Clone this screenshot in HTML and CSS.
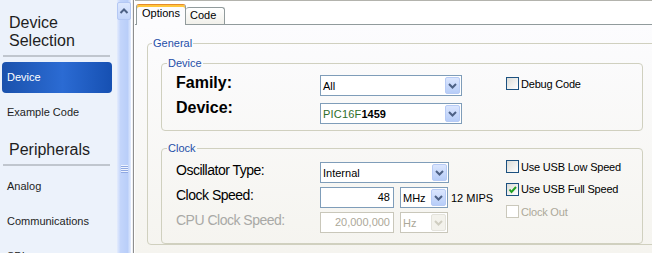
FILE: index.html
```html
<!DOCTYPE html>
<html>
<head>
  <title>Device Selection</title>
  <meta charset="UTF-8">
  <link rel="stylesheet" href="styles.css">
</head>
<body>
  <div class="window">
    <div class="sidebar">
      <h2 class="side-title">Device<br>Selection</h2>
      <hr class="side-rule">
      <div class="side-item active">Device</div>
      <div class="side-item">Example Code</div>
      <h2 class="side-title second">Peripherals</h2>
      <hr class="side-rule">
      <div class="side-item">Analog</div>
      <div class="side-item">Communications</div>
      <div class="side-item">SPI</div>
    </div>

    <div class="scrollbar">
      <div class="scroll-btn">
        <svg width="12" height="16" viewBox="0 0 12 16"><path d="M2.5 10 L6 6.5 L9.5 10" fill="none" stroke="#4d6185" stroke-width="2"/></svg>
      </div>
      <div class="scroll-grip"></div>
    </div>
    <div class="splitter"></div>

    <div class="main">
      <div class="tabs">
        <div class="tab active">Options</div>
        <div class="tab">Code</div>
      </div>
      <div class="panel">
        <fieldset class="group general">
          <legend>General</legend>

          <fieldset class="group inner">
            <legend>Device</legend>
            <div class="row">
              <div class="labels big">
                <div>Family:</div>
                <div>Device:</div>
              </div>
              <div class="controls device-controls">
                <div class="select family">
                  <span class="value">All</span>
                  <span class="drop"><svg width="15" height="17" viewBox="0 0 15 17"><path d="M4 7 L7.5 10.5 L11 7" fill="none" stroke="#4d6185" stroke-width="2"/></svg></span>
                </div>
                <div class="select family">
                  <span class="value"><span class="part">PIC16F</span><b>1459</b></span>
                  <span class="drop"><svg width="15" height="17" viewBox="0 0 15 17"><path d="M4 7 L7.5 10.5 L11 7" fill="none" stroke="#4d6185" stroke-width="2"/></svg></span>
                </div>
              </div>
              <div class="checks device-checks">
                <div class="check"><span class="box"></span>Debug Code</div>
              </div>
            </div>
          </fieldset>

          <fieldset class="group inner clock">
            <legend>Clock</legend>
            <div class="row">
              <div class="labels normal">
                <div>Oscillator Type:</div>
                <div>Clock Speed:</div>
                <div class="disabled-text">CPU Clock Speed:</div>
              </div>
              <div class="controls clock-controls">
                <div class="select osc">
                  <span class="value">Internal</span>
                  <span class="drop"><svg width="15" height="17" viewBox="0 0 15 17"><path d="M4 7 L7.5 10.5 L11 7" fill="none" stroke="#4d6185" stroke-width="2"/></svg></span>
                </div>
                <div class="inline">
                  <div class="field">48</div>
                  <div class="select unit">
                    <span class="value">MHz</span>
                    <span class="drop"><svg width="15" height="17" viewBox="0 0 15 17"><path d="M4 7 L7.5 10.5 L11 7" fill="none" stroke="#4d6185" stroke-width="2"/></svg></span>
                  </div>
                  <span class="mips">12 MIPS</span>
                </div>
                <div class="inline">
                  <div class="field disabled">20,000,000</div>
                  <div class="select unit disabled">
                    <span class="value">Hz</span>
                    <span class="drop"><svg width="15" height="17" viewBox="0 0 15 17"><path d="M4 7 L7.5 10.5 L11 7" fill="none" stroke="#cfcdc0" stroke-width="2"/></svg></span>
                  </div>
                </div>
              </div>
              <div class="checks clock-checks">
                <div class="check"><span class="box"></span>Use USB Low Speed</div>
                <div class="check"><span class="box"><svg width="11" height="11" viewBox="0 0 11 11"><path d="M2.5 5.5 L4.5 8 L9 3" fill="none" stroke="#21a121" stroke-width="2"/></svg></span>Use USB Full Speed</div>
                <div class="check disabled"><span class="box"></span>Clock Out</div>
              </div>
            </div>
          </fieldset>
        </fieldset>
      </div>
    </div>
  </div>
</body>
</html>
```

FILE: styles.css
```css
* {
  box-sizing: border-box;
}

body {
  margin: 0;
  font-family: "Liberation Sans", Arial, sans-serif;
  font-size: 11px;
  color: #000;
  background: #fff;
  overflow: hidden;
}

.window {
  display: flex;
  width: 652px;
  height: 253px;
  overflow: hidden;
}

/* left list */
.sidebar {
  flex: none;
  width: 117px;
  padding: 0 5px 0 2px;
  background: #ecf2fb;
  color: #1e1e1e;
}

.side-title {
  margin: 14px 0 0 7px;
  font-size: 16px;
  font-weight: normal;
  line-height: 18px;
}

/* item margin-bottom collapses into this one */
.side-title.second {
  margin-top: 13px;
}

.side-rule {
  margin: 5px 0 0 1px;
  width: 107px;
  height: 2px;
  border: 0;
  background: #c0c6ce;
}

.side-rule + .side-item {
  margin-top: 5px;
}

.side-item {
  height: 31px;
  line-height: 31px;
  padding-left: 5px;
  margin-bottom: 4px;
  border-radius: 4px;
  white-space: nowrap;
}

.side-item.active {
  color: #fff;
  background: linear-gradient(to right, #1a51ac, #2b6bd3 55%, #1650b2);
}

/* scrollbar + splitter */
.scrollbar {
  flex: none;
  width: 14px;
  padding-top: 2px;
  background: linear-gradient(to right, #e4ecfd, #c3d5fb 25%, #b9cef9 75%, #e4ecfd);
}

.scroll-btn {
  height: 18px;
  display: flex;
  justify-content: center;
  border: 1px solid #b4c8f4;
  border-radius: 2px;
  background: linear-gradient(#dde8fe, #c4d6fb);
}

.scroll-grip {
  margin: 145px auto 0;
  width: 7px;
  height: 8px;
  background: repeating-linear-gradient(#eef3fe 0 1px, #8fa8e2 1px 2px);
}

.splitter {
  flex: none;
  width: 4px;
  background: linear-gradient(to right, #fff 0 1px, #eef0f4 1px 2px, #8e8e8e 2px 3px, #fff 3px);
}

/* main area */
.main {
  flex: 1;
  border-top: 1px solid #b3b3ad;
  background: #fff;
  overflow: hidden;
}

.tabs {
  height: 23px;
  display: flex;
  align-items: flex-end;
  padding-left: 1px;
}

.tab {
  border: 1px solid #919b9c;
  border-bottom: 0;
  border-radius: 3px 3px 0 0;
  line-height: 13px;
  white-space: nowrap;
}

.tab.active {
  position: relative;
  z-index: 1;
  width: 50px;
  height: 21px;
  margin-bottom: -1px;
  padding: 2px 0 0 5px;
  border-top-color: #e68b2c;
  box-shadow: inset 0 2px #ffc73c;
  background: #fcfcfe;
}

.tab:not(.active) {
  width: 39px;
  height: 17px;
  padding: 1px 0 0 4px;
  border-left: 0;
  background: linear-gradient(#fff, #f1f0ea);
}

.panel {
  height: 229px;
  border-top: 1px solid #919b9c;
  padding-left: 12px;
  background: linear-gradient(#fcfcfe, #f5f4ef);
}

.group {
  margin: 0;
  padding: 0;
  min-width: 0;
  border: 1px solid #d0d0bf;
  border-radius: 4px;
}

.group legend {
  margin-left: 4px;
  padding: 0 1px;
  line-height: 12px;
  color: #1f4fa8;
}

.general {
  margin-top: 12px;
  width: 520px;
}

.inner {
  margin: 8px 0 0 13px;
  width: 482px;
}

.inner legend {
  margin-left: 5px;
}

.inner.clock {
  margin-top: 11px;
}

.row {
  display: flex;
  align-items: flex-start;
  padding-left: 14px;
}

.labels {
  flex: none;
  width: 144px;
  line-height: 25px;
  white-space: nowrap;
}

.labels.big {
  padding-top: 1px;
  font-size: 16px;
  font-weight: bold;
}

.labels.normal {
  padding-top: 4px;
  font-size: 14px;
  letter-spacing: -0.5px;
}

.disabled-text {
  color: #a9a9a6;
}

.controls {
  flex: none;
  display: flex;
  flex-direction: column;
}

.device-controls {
  width: 142px;
  padding: 6px 0 6px;
  gap: 7px;
}

.clock-controls {
  width: 186px;
  padding: 8px 0 10px;
  gap: 4px;
}

.inline {
  display: flex;
  align-items: center;
}

.select {
  height: 21px;
  display: flex;
  align-items: center;
  padding: 1px;
  border: 1px solid #7f9db9;
  background: #fff;
}

.select .value {
  flex: 1;
  padding-left: 1px;
  white-space: nowrap;
}

.select .drop {
  flex: none;
  width: 15px;
  height: 17px;
  display: flex;
  border: 1px solid #b7cbf5;
  border-radius: 2px;
  background: linear-gradient(#dbe6fe, #b7cdf8);
}

.select .drop svg {
  margin: -1px;
}

.family {
  width: 142px;
}

.osc {
  width: 129px;
}

.unit {
  width: 48px;
  margin-left: 6px;
}

.part {
  color: #2f6e2a;
  letter-spacing: 0.2px;
}

.field {
  width: 74px;
  height: 21px;
  padding-right: 3px;
  line-height: 19px;
  text-align: right;
  border: 1px solid #7f9db9;
  background: #fff;
}

.field.disabled,
.select.disabled {
  border-color: #c9c7ba;
  color: #aca899;
}

.select.disabled .drop {
  border-color: #e4e3dc;
  background: #f3f2ec;
}

.mips {
  margin-left: 3px;
}

.checks {
  flex: none;
  display: flex;
  flex-direction: column;
}

.device-checks {
  margin-left: 44px;
  padding-top: 8px;
}

.clock-checks {
  padding-top: 6px;
  gap: 9.5px;
}

.check {
  display: flex;
  align-items: center;
  height: 13px;
  letter-spacing: -0.2px;
  white-space: nowrap;
}

.check .box {
  flex: none;
  width: 13px;
  height: 13px;
  margin-right: 2px;
  border: 1px solid #1c5180;
  background: linear-gradient(135deg, #dcdcd7, #fff);
}

.check .box svg {
  display: block;
}

.check.disabled {
  color: #aca899;
}

.check.disabled .box {
  border-color: #cac8bb;
  background: #fff;
}
```
